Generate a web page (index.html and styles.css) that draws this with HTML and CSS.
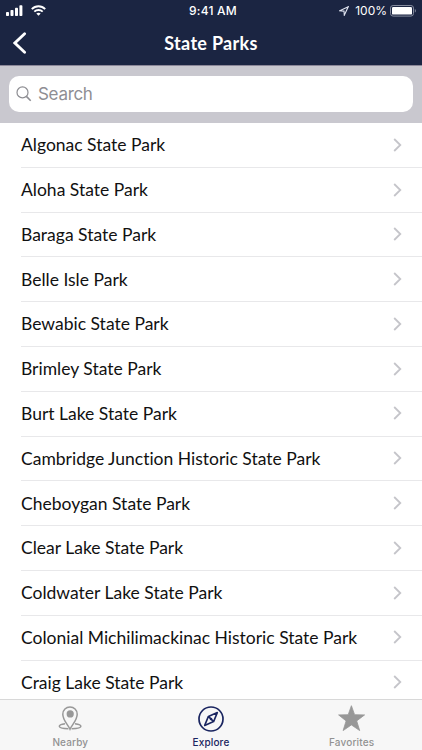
FILE: index.html
```html
<!DOCTYPE html>
<html lang="en">
<head>
    <meta charset="UTF-8">
    <meta name="viewport" content="width=device-width, initial-scale=1.0">
    <title>State Parks</title>
    <link rel="stylesheet" href="styles.css">
</head>
<body>
    <svg class="sprite">
        <symbol id="chevron" viewBox="0 0 9 14">
            <path d="M1.2 1 L7.3 7 L1.2 13" fill="none" stroke="#c5c5ca" stroke-width="1.8"/>
        </symbol>
    </svg>

    <header class="header">
        <div class="status-bar">
            <div class="status-left">
                <svg class="signal" width="17" height="11" viewBox="0 0 17 11" fill="#fff">
                    <rect x="0" y="7" width="3" height="4" rx="0.8"/>
                    <rect x="4.5" y="5" width="3" height="6" rx="0.8"/>
                    <rect x="9" y="2.8" width="3" height="8.2" rx="0.8"/>
                    <rect x="13.4" y="0.3" width="3" height="10.7" rx="0.8"/>
                </svg>
                <svg class="wifi" width="15" height="11" viewBox="0 0 15 11" fill="none" stroke="#fff" stroke-width="1.9">
                    <path d="M0.8 4.1 C4.5 0.3 10.5 0.3 14.2 4.1"/>
                    <path d="M3.3 6.6 C5.6 4.4 9.4 4.4 11.7 6.6"/>
                    <path d="M7.5 10.7 L5.3 8.6 C6.5 7.5 8.5 7.5 9.7 8.6 Z" fill="#fff" stroke="none"/>
                </svg>
            </div>
            <span class="time">9:41 AM</span>
            <div class="status-right">
                <svg width="10" height="10" viewBox="0 0 10 10" fill="none" stroke="#dfe3ef" stroke-width="1.1">
                    <path d="M9.2 0.8 L0.8 4.8 L5 5.1 L5.3 9.2 Z"/>
                </svg>
                <span class="percent">100%</span>
                <svg width="26" height="12" viewBox="0 0 26 12">
                    <rect x="0.5" y="0.5" width="23" height="10.6" rx="2.6" fill="none" stroke="#858b9e"/>
                    <rect x="2" y="2" width="20" height="7.6" rx="1.2" fill="#fff"/>
                    <path d="M24.8 4 C26.2 4.4 26.2 7.2 24.8 7.6 Z" fill="#858b9e"/>
                </svg>
            </div>
        </div>
        <div class="nav-bar">
            <svg class="back" width="14" height="22" viewBox="0 0 14 22">
                <path d="M11.6 1.8 L1.9 11 L11.6 20.2" fill="none" stroke="#fff" stroke-width="2.8" stroke-linecap="round"/>
            </svg>
            <h1 class="title">State Parks</h1>
        </div>
    </header>

    <div class="search-bar">
        <div class="search-field">
            <svg width="16" height="16" viewBox="0 0 16 16" fill="none" stroke="#8e8e93" stroke-width="1.2">
                <circle cx="6.5" cy="6.4" r="5.5"/>
                <path d="M10.4 10.4 L14.7 14.7" stroke-width="1.6"/>
            </svg>
            <span class="placeholder">Search</span>
        </div>
    </div>

    <ul class="park-list">
        <li class="park"><span>Algonac State Park</span><svg class="chevron"><use href="#chevron"/></svg></li>
        <li class="park"><span>Aloha State Park</span><svg class="chevron"><use href="#chevron"/></svg></li>
        <li class="park"><span>Baraga State Park</span><svg class="chevron"><use href="#chevron"/></svg></li>
        <li class="park"><span>Belle Isle Park</span><svg class="chevron"><use href="#chevron"/></svg></li>
        <li class="park"><span>Bewabic State Park</span><svg class="chevron"><use href="#chevron"/></svg></li>
        <li class="park"><span>Brimley State Park</span><svg class="chevron"><use href="#chevron"/></svg></li>
        <li class="park"><span>Burt Lake State Park</span><svg class="chevron"><use href="#chevron"/></svg></li>
        <li class="park"><span>Cambridge Junction Historic State Park</span><svg class="chevron"><use href="#chevron"/></svg></li>
        <li class="park"><span>Cheboygan State Park</span><svg class="chevron"><use href="#chevron"/></svg></li>
        <li class="park"><span>Clear Lake State Park</span><svg class="chevron"><use href="#chevron"/></svg></li>
        <li class="park"><span>Coldwater Lake State Park</span><svg class="chevron"><use href="#chevron"/></svg></li>
        <li class="park"><span>Colonial Michilimackinac Historic State Park</span><svg class="chevron"><use href="#chevron"/></svg></li>
        <li class="park"><span>Craig Lake State Park</span><svg class="chevron"><use href="#chevron"/></svg></li>
    </ul>

    <nav class="tab-bar">
        <div class="tab">
            <svg width="28" height="28" viewBox="0 0 28 28" fill="none" stroke="#989898" stroke-width="1.5">
                <path d="M14 24.2 C12 19.5 6.8 15.3 6.8 9.2 C6.8 4.9 10 2 14 2 C18 2 21.2 4.9 21.2 9.2 C21.2 15.3 16 19.5 14 24.2 Z"/>
                <circle cx="14.2" cy="8.9" r="3.6" fill="#989898" stroke="none"/>
                <path d="M9 18.8 C5.5 19.3 3.3 20.2 3.3 21.3 C3.3 22.6 7 23.6 12.4 23.8 M19 18.8 C22.5 19.3 24.9 20.2 24.9 21.3 C24.9 22.6 21.2 23.6 15.6 23.8"/>
            </svg>
            <span class="tab-label">Nearby</span>
        </div>
        <div class="tab active">
            <svg width="28" height="28" viewBox="0 0 28 28" fill="none" stroke="#1a2560" stroke-width="1.7">
                <circle cx="14" cy="14" r="12"/>
                <path d="M20.3 7.6 L16.6 16.6 L7.7 20.4 L11.4 11.4 Z M11.4 11.4 L16.6 16.6" stroke-width="1.6" stroke-linejoin="round"/>
                <circle cx="14" cy="14" r="1.3" fill="#1a2560" stroke="none"/>
            </svg>
            <span class="tab-label">Explore</span>
        </div>
        <div class="tab">
            <svg width="28" height="28" viewBox="0 0 28 28" fill="#989898" stroke="#989898" stroke-width="0.8" stroke-linejoin="round">
                <path d="M13.4 0.7 L16.6 9.7 L26.6 9.9 L18.7 15.9 L21.7 25.6 L13.4 19.9 L5.1 25.6 L8.1 15.9 L0.6 9.9 L10.2 9.7 Z"/>
            </svg>
            <span class="tab-label">Favorites</span>
        </div>
    </nav>
</body>
</html>
```
FILE: styles.css
```css
* {
    box-sizing: border-box;
}

body {
    margin: 0;
    height: 750px;
    display: flex;
    flex-direction: column;
    overflow: hidden;
    background: #fff;
    font-family: Lato, sans-serif;
    color: #111;
}

.sprite {
    display: none;
}

.header {
    flex: none;
    height: 66px;
    background: #1b2542;
    border-bottom: 1px solid #8b8798;
    color: #fff;
}

.status-bar {
    height: 21px;
    padding: 0 6px;
    display: grid;
    grid-template-columns: 1fr auto 1fr;
    align-items: center;
    font-family: Inter, sans-serif;
    font-size: 12px;
}

.status-left,
.status-right {
    display: flex;
    align-items: center;
}

.status-left {
    gap: 8px;
}

.status-right {
    justify-content: flex-end;
}

.time {
    padding-left: 4px;
    font-weight: 500;
    letter-spacing: 0.2px;
}

.percent {
    margin: 0 3px 0 6px;
}

.nav-bar {
    height: 44px;
    padding: 0 13px;
    display: grid;
    grid-template-columns: 14px 1fr 14px;
    align-items: center;
}

.title {
    margin: 0;
    text-align: center;
    font-size: 18px;
    font-weight: 700;
    letter-spacing: 0.3px;
}

.search-bar {
    flex: none;
    height: 57px;
    padding: 10px 9px 11px;
    background: #c9c8cf;
}

.search-field {
    height: 36px;
    padding: 0 7px;
    display: flex;
    align-items: center;
    gap: 6px;
    background: #fff;
    border-radius: 10px;
}

.placeholder {
    color: #8e8e93;
    font-family: Inter, sans-serif;
    font-size: 17px;
    letter-spacing: -0.3px;
}

.park-list {
    flex: 1;
    min-height: 0;
    overflow: hidden;
    margin: 0;
    padding: 0 0 0 21px;
    list-style: none;
}

.park {
    height: 44.8px;
    padding: 0 20px 0.4px 0;
    display: flex;
    align-items: center;
    justify-content: space-between;
    border-bottom: 1px solid #e8e8ea;
    font-size: 17.5px;
    font-variant-ligatures: none;
    white-space: nowrap;
}

.chevron {
    width: 9px;
    height: 14px;
}

.tab-bar {
    flex: none;
    height: 51px;
    display: grid;
    grid-template-columns: repeat(3, 1fr);
    background: #f7f7f7;
    border-top: 1px solid #d8d8d8;
}

.tab {
    padding-top: 5px;
    display: flex;
    flex-direction: column;
    align-items: center;
    gap: 2px;
    color: #929292;
}

.tab.active {
    color: #1a2560;
}

.tab-label {
    font-family: Inter, sans-serif;
    font-size: 10px;
    line-height: 14px;
    font-weight: 500;
    letter-spacing: 0.15px;
}
```
